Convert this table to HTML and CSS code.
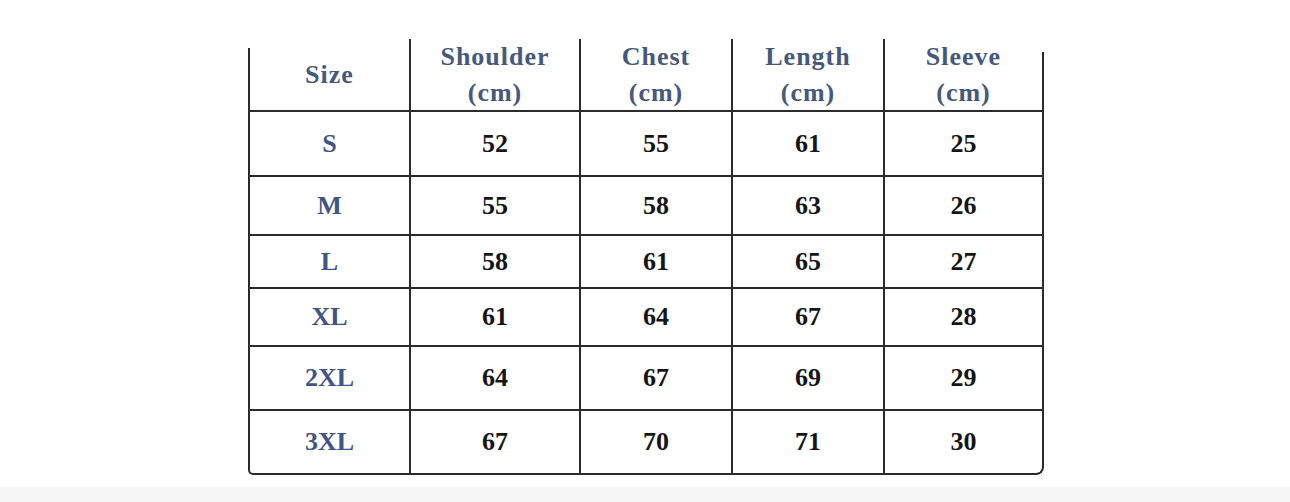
FILE: index.html
```html
<!DOCTYPE html>
<html>
<head>
<meta charset="utf-8">
<link rel="stylesheet" href="styles.css">
</head>
<body>
<div class="page">
  <main class="stage">
    <div class="chart">
      <div class="cell head first"><span>Size</span></div>
      <div class="cell head"><span>Shoulder<br>(cm)</span></div>
      <div class="cell head"><span>Chest<br>(cm)</span></div>
      <div class="cell head"><span>Length<br>(cm)</span></div>
      <div class="cell head last"><span>Sleeve<br>(cm)</span></div>

      <div class="cell size first">S</div><div class="cell">52</div><div class="cell">55</div><div class="cell">61</div><div class="cell last">25</div>
      <div class="cell size first">M</div><div class="cell">55</div><div class="cell">58</div><div class="cell">63</div><div class="cell last">26</div>
      <div class="cell size first">L</div><div class="cell">58</div><div class="cell">61</div><div class="cell">65</div><div class="cell last">27</div>
      <div class="cell size first">XL</div><div class="cell">61</div><div class="cell">64</div><div class="cell">67</div><div class="cell last">28</div>
      <div class="cell size first">2XL</div><div class="cell">64</div><div class="cell">67</div><div class="cell">69</div><div class="cell last">29</div>
      <div class="cell size first end">3XL</div><div class="cell end">67</div><div class="cell end">70</div><div class="cell end">71</div><div class="cell end last">30</div>
    </div>
  </main>
  <div class="strip"></div>
</div>
</body>
</html>
```

FILE: styles.css
```css
html, body {
  margin: 0;
  padding: 0;
  background: #ffffff;
}

.page {
  width: 1290px;
  height: 502px;
  display: flex;
  flex-direction: column;
  overflow: hidden;
}

.stage {
  flex: 0 0 487px;
  padding: 39px 0 0 248px;
  box-sizing: border-box;
}

.strip {
  flex: 1 1 auto;
  background: #f6f6f6;
}

.chart {
  width: 796px;
  display: grid;
  grid-template-columns: 163px 170px 152px 152px 159px;
  grid-template-rows: 73px 65px 59px 53px 58px 64px 64px;
  font-family: "Liberation Serif", "Times New Roman", serif;
  font-weight: bold;
  font-size: 26px;
}

.cell {
  display: flex;
  align-items: center;
  justify-content: center;
  text-align: center;
  box-sizing: border-box;
  border-right: 2px solid #2b2b2b;
  border-bottom: 2px solid #2b2b2b;
  color: #151515;
}

.cell.first {
  border-left: 2px solid #2b2b2b;
}

.cell.end.first {
  border-bottom-left-radius: 5px;
}

.cell.end.last {
  border-bottom-right-radius: 8px;
}

.head {
  color: #45597c;
  line-height: 36px;
  letter-spacing: 1px;
}

.head.first {
  border-left: none;
  padding-left: 2px;
  background: linear-gradient(#2b2b2b, #2b2b2b) left 9px / 2px 100% no-repeat;
  box-shadow: -4px 0 0 -0px transparent;
}

.head.last {
  border-right: none;
  padding-right: 2px;
  background: linear-gradient(#2b2b2b, #2b2b2b) right 13px / 2px 100% no-repeat;
}

.size {
  color: #3f5684;
}
```
